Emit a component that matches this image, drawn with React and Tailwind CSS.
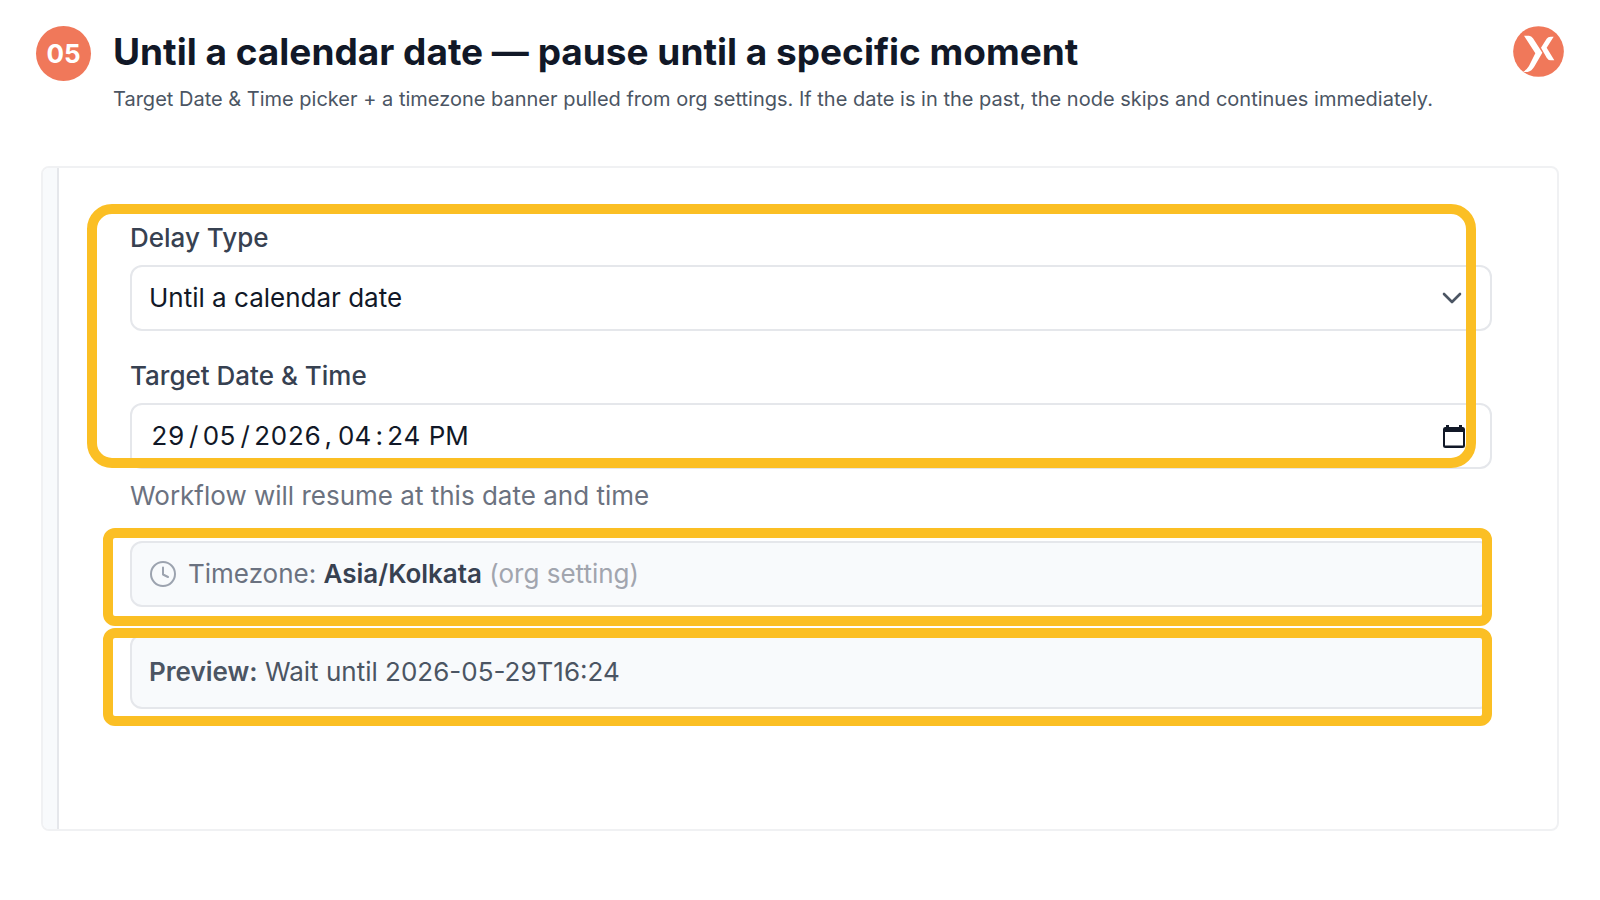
import { useState } from "react";

function Logo() {
  return (
    <svg viewBox="0 0 153 153" className="size-[51px] shrink-0" role="img" aria-label="Logo">
      <circle cx="76.500" cy="76.500" r="76" fill="#f0785a" />
      <path d="M33 29H48Q55 30 60 37L88 80L65 120Q56 136 44 138H30Q42 130 48 120L67 82Z" fill="#fff" />
      <path d="M122 32H113Q105 32 101 38L84 65L101 95Q106 103 113 103H124L101 65Z" fill="#fff" />
    </svg>
  );
}

function ChevronIcon() {
  return (
    <svg viewBox="0 0 20 12" className="h-3 w-5" fill="none" stroke="#4b5563" strokeWidth="2.6" strokeLinecap="round" strokeLinejoin="round">
      <path d="M2 2L10 10L18 2" />
    </svg>
  );
}

function CalendarIcon() {
  return (
    <svg viewBox="0 0 22 24" className="h-6 w-[22px]">
      <path d="M3 1H6V3H16V1H19V3A2.500 2.500 0 0 1 22 5V21.500A2.500 2.500 0 0 1 19.500 24H2.500A2.500 2.500 0 0 1 0 21.500V5A2.500 2.500 0 0 1 3 3ZM2 8V21.500H20V8Z" fill="#111827" fillRule="evenodd" />
    </svg>
  );
}

function ClockIcon() {
  return (
    <svg viewBox="0 0 26 26" className="size-[26px] shrink-0" fill="none" stroke="#9ca3af" strokeWidth="2" strokeLinecap="round" strokeLinejoin="round">
      <circle cx="13" cy="13" r="12" />
      <path d="M13 6.500V13.500L18 16" />
    </svg>
  );
}

const segments = [
  { key: "day", label: "Day", width: "w-[34px]", after: "/" },
  { key: "month", label: "Month", width: "w-[34px]", after: "/" },
  { key: "year", label: "Year", width: "w-[67px]", after: "," },
  { key: "hour", label: "Hour", width: "ml-0.5 w-[34px]", after: ":" },
  { key: "minute", label: "Minute", width: "w-[34px]", after: "" },
  { key: "period", label: "AM or PM", width: "ml-1 w-[42px]", after: "" },
];

export default function App() {
  const [delayType, setDelayType] = useState("calendar");
  const [target, setTarget] = useState({
    day: "29",
    month: "05",
    year: "2026",
    hour: "04",
    minute: "24",
    period: "PM",
  });

  return (
    <main className="min-h-screen bg-white pt-[26px] pb-[70px] font-['Inter','Liberation_Sans',sans-serif]">
      <header className="flex items-start pr-9 pl-9">
        <div className="flex size-[55px] shrink-0 items-center justify-center rounded-full bg-[#f0785a] text-[26px] font-bold text-white">
          05
        </div>
        <div className="ml-[22px] min-w-0 flex-1 pt-1">
          <h1 className="text-[37px] leading-[44px] font-bold text-[#111827]">
            Until a calendar date — pause until a specific moment
          </h1>
          <p className="mt-3 text-[20px] leading-[26px] text-[#4b5563]">
            Target Date &amp; Time picker + a timezone banner pulled from org settings. If the date is in the past, the node skips and continues immediately.
          </p>
        </div>
        <Logo />
      </header>

      <section className="mx-[41px] mt-[54px] flex min-h-[665px] overflow-hidden rounded-lg border-2 border-[#f0f1f3]">
        <div className="w-4 shrink-0 border-r-2 border-[#e5e7eb] bg-[#f8fafc]" />
        <form className="min-w-0 flex-1 pt-[54px] pr-[65px] pl-[71px] text-[26px] leading-8">
          <div className="relative">
            <label htmlFor="delay-type" className="block font-medium text-[#374151]">Delay Type</label>
            <div className="relative mt-[11px]">
              <select
                id="delay-type"
                value={delayType}
                onChange={(e) => setDelayType(e.target.value)}
                className="block h-[66px] w-full appearance-none rounded-xl border-2 border-[#e5e7eb] bg-white px-[17px] text-[#111827]"
              >
                <option value="calendar">Until a calendar date</option>
              </select>
              <span className="pointer-events-none absolute inset-y-0 right-[30px] flex items-center">
                <ChevronIcon />
              </span>
            </div>
            <label htmlFor="target-day" className="mt-[29px] block font-medium text-[#374151]">Target Date &amp; Time</label>
            <div className="mt-[11px] flex h-[66px] items-center justify-between rounded-xl border-2 border-[#e5e7eb] bg-white pr-[25px] pl-[19px]">
              <div className="flex items-center gap-1 text-[#111827] tabular-nums">
                {segments.map(({ key, label, width, after }) => (
                  <span key={key} className="flex items-center gap-1">
                    <input
                      id={`target-${key}`}
                      type="text"
                      aria-label={label}
                      value={target[key]}
                      onChange={(e) => setTarget({ ...target, [key]: e.target.value })}
                      className={`bg-transparent outline-none ${width}`}
                    />
                    {after && <span>{after}</span>}
                  </span>
                ))}
              </div>
              <button type="button" aria-label="Open calendar">
                <CalendarIcon />
              </button>
            </div>
            <div className="pointer-events-none absolute -top-[18px] right-4 bottom-px -left-[43px] rounded-[25px] border-10 border-[#fbbf24]" />
          </div>

          <p className="mt-[11px] text-[#6b7280]">Workflow will resume at this date and time</p>

          <div className="relative mt-[29px]">
            <div className="flex h-[66px] items-center gap-3 rounded-xl border-2 border-[#e5e7eb] bg-[#f8fafc] px-[18px] text-[#6b7280]">
              <ClockIcon />
              <p>
                Timezone: <strong className="font-semibold text-[#374151]">Asia/Kolkata</strong>{" "}
                <span className="text-[#a1a5ae]">(org setting)</span>
              </p>
            </div>
            <div className="pointer-events-none absolute -top-[13px] right-0 -bottom-[19px] -left-[27px] rounded-xl border-10 border-[#fbbf24]" />
          </div>

          <div className="relative mt-[27px]">
            <div className="flex h-[75px] items-center rounded-xl border-2 border-[#e5e7eb] bg-[#f8fafc] px-[17px] text-[#4b5563]">
              <p>
                <strong className="font-semibold">Preview:</strong> Wait until 2026-05-29T16:24
              </p>
            </div>
            <div className="pointer-events-none absolute -top-1.5 right-0 -bottom-[17px] -left-[27px] rounded-xl border-10 border-[#fbbf24]" />
          </div>
        </form>
      </section>
    </main>
  );
}
